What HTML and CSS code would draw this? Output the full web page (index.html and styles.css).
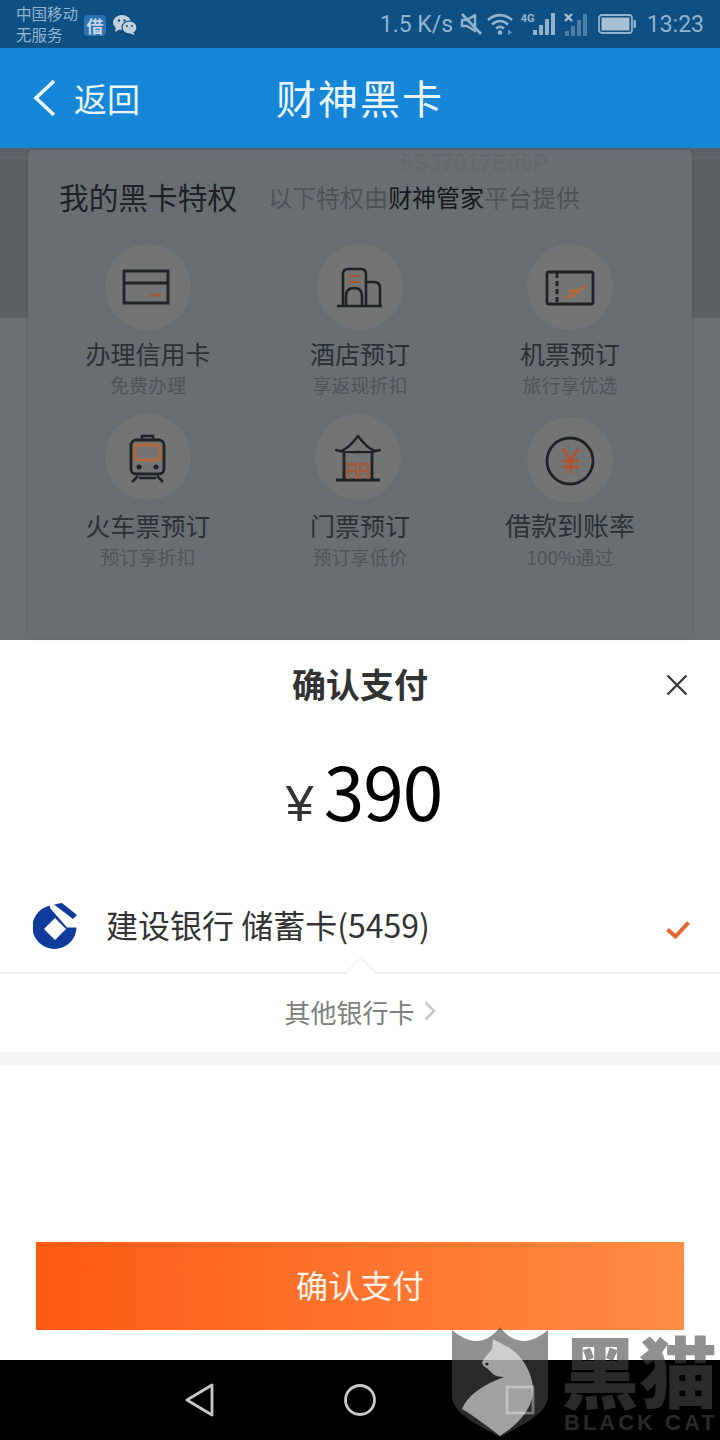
FILE: index.html
```html
<!DOCTYPE html>
<html lang="zh-CN">
<head>
<meta charset="utf-8">
<title>财神黑卡</title>
<link rel="stylesheet" href="styles.css">
</head>
<body>
<div class="screen">

    <div class="statusbar">
        <div class="carrier">
            <div>中国移动</div>
            <div>无服务</div>
        </div>
        <div class="app-badge">借</div>
        <svg class="wechat" width="24" height="22" viewBox="0 0 24 22">
            <ellipse cx="9" cy="8.5" rx="9" ry="7.5" fill="#c3cfdb"/>
            <path d="M3 13l-1 5 5-3z" fill="#c3cfdb"/>
            <ellipse cx="16.5" cy="13.5" rx="7.5" ry="6.5" fill="#c3cfdb" stroke="#0e5083" stroke-width="1.2"/>
            <path d="M20 18l2 3-5-1.500z" fill="#c3cfdb"/>
            <circle cx="6" cy="6.500" r="1.200" fill="#0e5083"/>
            <circle cx="11.500" cy="6.500" r="1.200" fill="#0e5083"/>
            <circle cx="14" cy="12" r="1" fill="#0e5083"/>
            <circle cx="19" cy="12" r="1" fill="#0e5083"/>
        </svg>
        <div class="status-right">
            <span class="speed">1.5 K/s</span>
            <svg class="ic-mute" width="22" height="24" viewBox="0 0 22 24">
                <path d="M2 8h5l8-5v16l-8-5H2z" fill="none" stroke="#93b3cd" stroke-width="2.400" stroke-linejoin="round"/>
                <path d="M2 2l19 20" stroke="#93b3cd" stroke-width="2.600"/>
            </svg>
            <svg class="ic-wifi" width="27" height="22" viewBox="0 0 27 22">
                <path d="M1 7c7-6.500 17-6.500 24 0M5 11.500c5-4.500 11-4.500 16 0M9 15.500c2.800-2.200 5.200-2.200 8 0" fill="none" stroke="#93b3cd" stroke-width="2.600"/>
                <circle cx="13" cy="19.500" r="2.300" fill="#93b3cd"/>
                <path d="M21 16.500l4 3-4 2.500z" fill="#6f97b8"/>
            </svg>
            <span class="signal">
                <span class="tag-4g">4G</span>
                <svg width="23" height="22" viewBox="0 0 23 22">
                    <path d="M0 17h4v5H0zM6 12h4v10H6zM12 6h4v16h-4zM18 0h4v22h-4z" fill="#93b3cd"/>
                </svg>
            </span>
            <svg class="ic-sim2" width="24" height="23" viewBox="0 0 24 23">
                <path d="M1 1l7 7M8 1L1 8" stroke="#a9c0d4" stroke-width="2.400"/>
                <path d="M1 18h4v5H1zM7 13h4v10H7zM13 7h4v16h-4zM19 1h4v22h-4z" fill="#4f7fa6"/>
            </svg>
            <svg class="ic-battery" width="38" height="20" viewBox="0 0 38 20">
                <rect x="1" y="1" width="33" height="18" rx="3" fill="none" stroke="#93b3cd" stroke-width="1.800"/>
                <rect x="3.500" y="3.500" width="28" height="13" fill="#a9bfd4"/>
                <rect x="35.500" y="6" width="2.500" height="8" rx="1" fill="#93b3cd"/>
            </svg>
            <span class="clock">13:23</span>
        </div>
    </div>

    <div class="topbar">
        <div class="back">
            <svg width="24" height="38" viewBox="0 0 24 38">
                <path d="M21 2L3 19l18 17" fill="none" stroke="#e9f4fc" stroke-width="3.600"/>
            </svg>
            <span>返回</span>
        </div>
        <div class="topbar-title">财神黑卡</div>
    </div>

    <div class="behind">
        <div class="behind-strip"></div>
        <div class="card">
            <div class="card-code">6S37017E06P</div>
            <div class="card-head">
                <span class="card-title">我的黑卡特权</span>
                <span class="card-sub">以下特权由<b>财神管家</b>平台提供</span>
            </div>
            <div class="perks">
                <div class="perk">
                    <div class="perk-circle">
                        <svg width="86" height="86" viewBox="0 0 86 86">
                            <path d="M19 27h44v32H19zM19 39h44" fill="none" stroke="#1f2327" stroke-width="2.800"/>
                            <path d="M45 51h11" stroke="#a15b3c" stroke-width="2.800"/>
                        </svg>
                    </div>
                    <div class="perk-name">办理信用卡</div>
                    <div class="perk-note">免费办理</div>
                </div>
                <div class="perk">
                    <div class="perk-circle">
                        <svg width="86" height="86" viewBox="0 0 86 86">
                            <path d="M26 62V30q0-5 5-5h13q5 0 5 5v32M49 38h8q6 0 6 6v18M20 62h45" fill="none" stroke="#1f2327" stroke-width="2.600"/>
                            <path d="M29 62V52q0-8 8-8t8 8v10" fill="none" stroke="#1f2327" stroke-width="2.600"/>
                            <path d="M32 32h11M32 38h11" stroke="#a15b3c" stroke-width="2.400"/>
                        </svg>
                    </div>
                    <div class="perk-name">酒店预订</div>
                    <div class="perk-note">享返现折扣</div>
                </div>
                <div class="perk">
                    <div class="perk-circle">
                        <svg width="86" height="86" viewBox="0 0 86 86">
                            <rect x="20" y="28" width="46" height="32" rx="1.500" fill="none" stroke="#1f2327" stroke-width="2.800"/>
                            <path d="M30 29v30" stroke="#1f2327" stroke-width="2.800" stroke-dasharray="5 3"/>
                            <path d="M39 53c4 0 7-1 10-4l10-8M42 47h9" fill="none" stroke="#b4663a" stroke-width="2.800"/>
                        </svg>
                    </div>
                    <div class="perk-name">机票预订</div>
                    <div class="perk-note">旅行享优选</div>
                </div>
                <div class="perk">
                    <div class="perk-circle">
                        <svg width="86" height="86" viewBox="0 0 86 86">
                            <rect x="26" y="26" width="33" height="34" rx="5" fill="none" stroke="#1f2327" stroke-width="2.800"/>
                            <path d="M37 25v-3h11v3M33 62l-6 6M52 62l6 6M34 64h17" fill="none" stroke="#1f2327" stroke-width="2.600"/>
                            <rect x="30" y="31" width="25" height="15" rx="3" fill="none" stroke="#b4663a" stroke-width="2.800"/>
                            <circle cx="34" cy="53" r="2.500" fill="#1f2327"/>
                            <circle cx="51" cy="53" r="2.500" fill="#1f2327"/>
                        </svg>
                    </div>
                    <div class="perk-name">火车票预订</div>
                    <div class="perk-note">预订享折扣</div>
                </div>
                <div class="perk perk-gate">
                    <div class="perk-circle">
                        <svg width="86" height="86" viewBox="0 0 86 86">
                            <path d="M21 36c3 1 5 1 7 0 7-3 11-9 15-14 4 5 8 11 15 14 2 1 4 1 7 0-7 3-14 2-22 2s-15 1-22-2z" fill="none" stroke="#1f2327" stroke-width="2.400" stroke-linejoin="round"/>
                            <path d="M29 38v27M57 38v27M21 66h44" stroke="#1f2327" stroke-width="2.800"/>
                            <path d="M33 65V50h8v15M33 57h8M45 65V50h8v15M45 57h8" fill="none" stroke="#a15b3c" stroke-width="2.600"/>
                        </svg>
                    </div>
                    <div class="perk-name">门票预订</div>
                    <div class="perk-note">预订享低价</div>
                </div>
                <div class="perk perk-rate">
                    <div class="perk-circle">
                        <svg width="86" height="86" viewBox="0 0 86 86">
                            <circle cx="43" cy="44" r="23" fill="none" stroke="#1f2327" stroke-width="2.800"/>
                            <path d="M36 32l7.500 11L51 32M43.500 43v14M36 44h15M36 50h15" fill="none" stroke="#b4532f" stroke-width="2.800"/>
                        </svg>
                    </div>
                    <div class="perk-name">借款到账率</div>
                    <div class="perk-note">100%通过</div>
                </div>
            </div>
        </div>
    </div>

    <div class="sheet">
        <div class="sheet-head">
            <span class="sheet-title">确认支付</span>
            <svg class="sheet-close" width="22" height="22" viewBox="0 0 22 22">
                <path d="M1.500 1.500l19 19M20.500 1.500l-19 19" stroke="#3a3a3a" stroke-width="2.400"/>
            </svg>
        </div>
        <div class="amount">
            <span class="amount-unit">¥</span>
            <span class="amount-num">390</span>
        </div>
        <div class="bank-row">
            <svg class="bank-logo" width="44" height="46" viewBox="0 0 44 46">
                <circle cx="21.500" cy="24" r="22" fill="#0f3c9c"/>
                <path d="M17 5l17 19.500h12V-2H17z" fill="#fff"/>
                <path d="M21 1.500L29 0l15 12-4 4z" fill="#0f3c9c"/>
                <path d="M22 15l11 11-11 11-11-11z" fill="#fff"/>
            </svg>
            <span class="bank-name">建设银行 储蓄卡(5459)</span>
            <svg class="bank-check" width="24" height="18" viewBox="0 0 24 18">
                <path d="M1.500 8.500l8 7L22.500 1.500" fill="none" stroke="#e8672d" stroke-width="4"/>
            </svg>
        </div>
        <div class="other-row">
            <span>其他银行卡</span>
            <svg width="12" height="20" viewBox="0 0 12 20">
                <path d="M1.500 1.500l8.500 8.500-8.500 8.500" fill="none" stroke="#c8c8c8" stroke-width="2.600"/>
            </svg>
        </div>
        <div class="band"></div>
        <div class="sheet-foot">
            <div class="pay-btn">确认支付</div>
        </div>
    </div>

    <div class="navbar">
        <svg width="32" height="34" viewBox="0 0 32 34">
            <path d="M28 2v30L3 17z" fill="none" stroke="#c8c8c8" stroke-width="2.800" stroke-linejoin="round"/>
        </svg>
        <svg width="32" height="34" viewBox="0 0 32 34">
            <circle cx="16" cy="17" r="14.500" fill="none" stroke="#c8c8c8" stroke-width="2.800"/>
        </svg>
        <svg width="32" height="34" viewBox="0 0 32 34">
            <rect x="3" y="4" width="26" height="26" fill="none" stroke="#c8c8c8" stroke-width="2.800"/>
        </svg>
    </div>

    <div class="watermark">
        <svg class="wm-shield" width="98" height="112" viewBox="0 0 98 112">
            <path d="M1 5c8 7 17 11 24 11 10 0 18-6 24-14 6 8 14 14 24 14 7 0 16-4 24-11v66c0 18-28 30-48 41C29 101 1 89 1 71z" fill="rgba(70,70,70,0.6)"/>
            <path d="M42 14l13 7c20 10 28 34 27 46-1 18-16 33-33 44-13-10-26-20-38-27 5-13 20-24 42-32-8 0-12-3-16-8-3-2-6-4-6-7 3-5 7-9 10-13z" fill="rgba(255,255,255,0.56)"/>
            <circle cx="36" cy="39" r="1.600" fill="#222"/>
        </svg>
        <div class="wm-text">
            <div class="wm-cn">黑猫</div>
            <div class="wm-en">BLACK CAT</div>
        </div>
    </div>

</div>
</body>
</html>
```

FILE: styles.css
```css
* {
    box-sizing: border-box;
}

body {
    margin: 0;
    font-family: "Noto Sans CJK SC", "Noto Sans", sans-serif;
    background-color: #fff;
}

.screen {
    position: relative;
    width: 720px;
    height: 1440px;
    overflow: hidden;
    display: flex;
    flex-direction: column;
}

/* status bar */
.statusbar {
    height: 48px;
    flex: none;
    display: flex;
    align-items: center;
    padding: 0 16px;
    background-color: #0e5083;
    color: #93b3cd;
}

.carrier {
    width: 68px;
    font-size: 15.500px;
    line-height: 21px;
}

.app-badge {
    width: 22px;
    height: 21px;
    margin-top: 2px;
    border-radius: 4px;
    background-color: #2a74b4;
    color: #c4d5e4;
    font-size: 17px;
    font-weight: 700;
    line-height: 21px;
    text-align: center;
}

.wechat {
    margin: 2px 0 0 7px;
}

.status-right {
    margin-left: auto;
    display: flex;
    align-items: center;
    font-family: Roboto, sans-serif;
    font-size: 23px;
}

.speed {
    width: 80px;
}

.ic-wifi {
    margin-left: 5px;
}

.signal {
    display: flex;
    align-items: flex-start;
    margin-left: 7px;
}

.tag-4g {
    width: 12px;
    font-size: 11px;
    font-weight: 700;
    line-height: 12px;
    white-space: nowrap;
}

.ic-sim2 {
    margin-left: 8px;
}

.ic-battery {
    margin-left: 10px;
}

.clock {
    margin-left: 11px;
}

/* top bar */
.topbar {
    position: relative;
    height: 100px;
    flex: none;
    display: flex;
    align-items: center;
    justify-content: center;
    background-color: #1686d9;
    color: #e9f4fc;
}

.back {
    position: absolute;
    left: 33px;
    top: 31px;
    display: flex;
    align-items: center;
    gap: 17px;
    font-size: 33px;
    line-height: 36px;
}

.topbar-title {
    margin-top: -2px;
    font-size: 40px;
    letter-spacing: 2px;
    line-height: 54px;
}

/* dimmed page behind the sheet */
.behind {
    position: relative;
    height: 492px;
    flex: none;
    padding: 2px 28px;
    background-color: #6b7074;
}

.behind::after {
    content: "";
    position: absolute;
    left: 0;
    right: 0;
    top: 9px;
    height: 1px;
    background-color: rgba(120, 150, 185, 0.15);
}

.behind-strip {
    position: absolute;
    left: 0;
    right: 0;
    top: 0;
    height: 170px;
    background-color: #5b6064;
}

.card {
    position: relative;
    height: 488px;
    padding: 26px 0 0 14px;
    background-color: #696e73;
    border-radius: 5px;
    box-shadow: 0 0 4px rgba(0, 0, 0, 0.15);
}

.card-code {
    position: absolute;
    left: 372px;
    top: 0;
    color: #65696e;
    font-family: "Liberation Sans", sans-serif;
    font-size: 23px;
    font-weight: 700;
    line-height: 26px;
}

.card-head {
    display: flex;
    align-items: center;
    height: 40px;
    padding-left: 17px;
}

.card-title {
    color: #1e2226;
    font-size: 29.700px;
}

.card-sub {
    margin-left: 31px;
    color: #4d5257;
    font-size: 24px;
}

.card-sub b {
    color: #16191c;
    font-weight: 400;
}

.perks {
    display: grid;
    grid-template-columns: 212px 212px 208px;
    row-gap: 16px;
    margin-top: 28px;
}

.perk {
    text-align: center;
}

.perk-circle {
    width: 86px;
    height: 86px;
    margin: 0 auto 6px;
    border-radius: 50%;
    background-color: #727573;
}

.perk-circle svg {
    display: block;
}

.perk:nth-child(n+4) .perk-circle {
    margin-bottom: 8px;
}

.perk-gate .perk-circle {
    margin-left: 61px;
}

.perk.perk-rate .perk-circle {
    margin-top: 3px;
    margin-bottom: 5px;
}

.perk-name {
    color: #2b3035;
    font-size: 25px;
    line-height: 34px;
}

.perk-rate .perk-name {
    font-size: 26px;
}

.perk-note {
    margin-top: 2px;
    color: #4f5459;
    font-size: 19px;
    line-height: 26px;
}

/* payment sheet */
.sheet {
    height: 720px;
    flex: none;
    display: flex;
    flex-direction: column;
    background-color: #fff;
}

.sheet-head {
    position: relative;
    height: 90px;
    flex: none;
    display: flex;
    align-items: center;
    justify-content: center;
}

.sheet-title {
    margin-top: -4px;
    color: #333;
    font-size: 34px;
    font-weight: 700;
}

.sheet-close {
    position: absolute;
    right: 32px;
    top: 34px;
}

.amount {
    height: 130px;
    flex: none;
    display: flex;
    align-items: baseline;
    justify-content: center;
    gap: 10px;
    padding-left: 8px;
    color: #000;
}

.amount-unit {
    color: #333;
    font-family: "Liberation Sans", sans-serif;
    font-size: 50px;
    line-height: 118px;
}

.amount-num {
    font-size: 73px;
    letter-spacing: -1px;
    line-height: 118px;
}

.bank-row {
    position: relative;
    height: 114px;
    flex: none;
    display: flex;
    align-items: center;
    padding: 19px 30px 0 33px;
    border-bottom: 2px solid #ececec;
}

.bank-row::after {
    content: "";
    position: absolute;
    left: 350px;
    bottom: -11px;
    width: 20px;
    height: 20px;
    background-color: #fff;
    border-top: 2px solid #f4f4f4;
    border-left: 2px solid #f4f4f4;
    transform: rotate(45deg);
}

.bank-logo {
    flex: none;
}

.bank-name {
    margin: -4px 0 0 29px;
    color: #333;
    font-size: 32px;
}

.bank-check {
    margin: 8px 0 0 auto;
}

.other-row {
    height: 78px;
    flex: none;
    display: flex;
    align-items: center;
    justify-content: center;
    gap: 9px;
    padding-bottom: 4px;
    color: #808080;
    font-size: 26px;
}

.band {
    height: 13px;
    flex: none;
    background-color: #f5f5f5;
}

.sheet-foot {
    flex: 1;
    display: flex;
    align-items: flex-end;
    padding: 0 36px 30px;
}

.pay-btn {
    width: 100%;
    height: 88px;
    background: linear-gradient(90deg, #ff5a14, #ff8c45);
    color: #fff3ea;
    font-size: 32px;
    line-height: 84px;
    text-align: center;
}

/* system nav */
.navbar {
    height: 80px;
    flex: none;
    display: flex;
    align-items: center;
    justify-content: space-between;
    padding: 0 184px;
    background-color: #000;
}

/* watermark lies over everything */
.watermark {
    position: absolute;
    left: 451px;
    top: 1325px;
    width: 269px;
    height: 115px;
    display: flex;
    pointer-events: none;
}

.wm-shield {
    flex: none;
}

.wm-text {
    margin-left: 15px;
    color: rgba(70, 70, 70, 0.6);
}

.wm-cn {
    margin: 2px 0 0 -3px;
    font-size: 78px;
    font-weight: 900;
    line-height: 84px;
    white-space: nowrap;
}

.wm-en {
    font-family: "Liberation Sans", sans-serif;
    font-size: 22px;
    font-weight: 700;
    letter-spacing: 3px;
    line-height: 24px;
    white-space: nowrap;
}
```
